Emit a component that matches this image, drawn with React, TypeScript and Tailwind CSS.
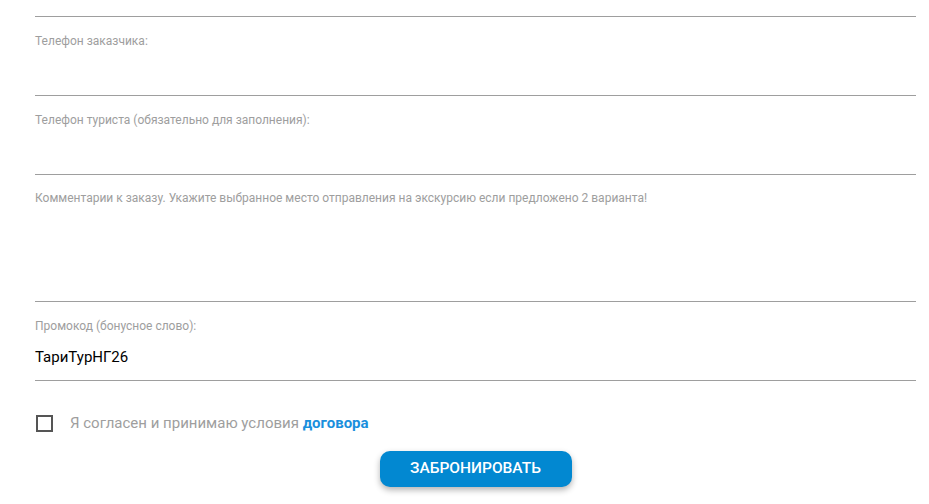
export default function App() {
  const font = { fontFamily: "Roboto, 'Noto Sans', Arial, sans-serif" };
  return (
    <div className="w-[929px] h-[504px] bg-white overflow-hidden font-['Roboto',sans-serif]">
      <div className="pl-[35px] pr-[13px] pt-[16px]">
        <div className="border-t border-[#9e9e9e]" />
        <div className="h-[79px] border-b border-[#9e9e9e] pt-[17px]">
          <div className="text-[12px] leading-[14px] text-[#9e9e9e]">Телефон заказчика:</div>
        </div>
        <div className="h-[79px] border-b border-[#9e9e9e] pt-[17px]">
          <div className="text-[12px] leading-[14px] text-[#9e9e9e]">Телефон туриста (обязательно для заполнения):</div>
        </div>
        <div className="h-[127px] border-b border-[#9e9e9e] pt-[16px]">
          <div className="text-[12px] leading-[14px] text-[#9e9e9e]">
            Комментарии к заказу. Укажите выбранное место отправления на экскурсию если предложено 2 варианта!
          </div>
        </div>
        <div className="h-[79px] border-b border-[#9e9e9e] pt-[17px]">
          <div className="text-[12px] leading-[14px] text-[#9e9e9e]">Промокод (бонусное слово):</div>
          <div className="mt-[12px] text-[15px] leading-[24px] text-black">ТариТурНГ26</div>
        </div>
        <div className="mt-[33px] flex items-center">
          <div className="w-[17px] h-[17px] border-2 border-[#555] ml-[1px]" />
          <div className="ml-[17px] text-[15px] leading-[18px] text-[#9e9e9e]" style={font}>
            Я согласен и принимаю условия <span className="font-bold text-[#1a8fdd]">договора</span>
          </div>
        </div>
        <div className="mt-[19px] flex justify-center">
          <button className="w-[192px] h-[36px] rounded-[10px] bg-[#0288d1] text-white text-[15.5px] font-medium uppercase shadow-[0_3px_6px_rgba(0,0,0,0.3)]">
            Забронировать
          </button>
        </div>
      </div>
    </div>
  );
}
